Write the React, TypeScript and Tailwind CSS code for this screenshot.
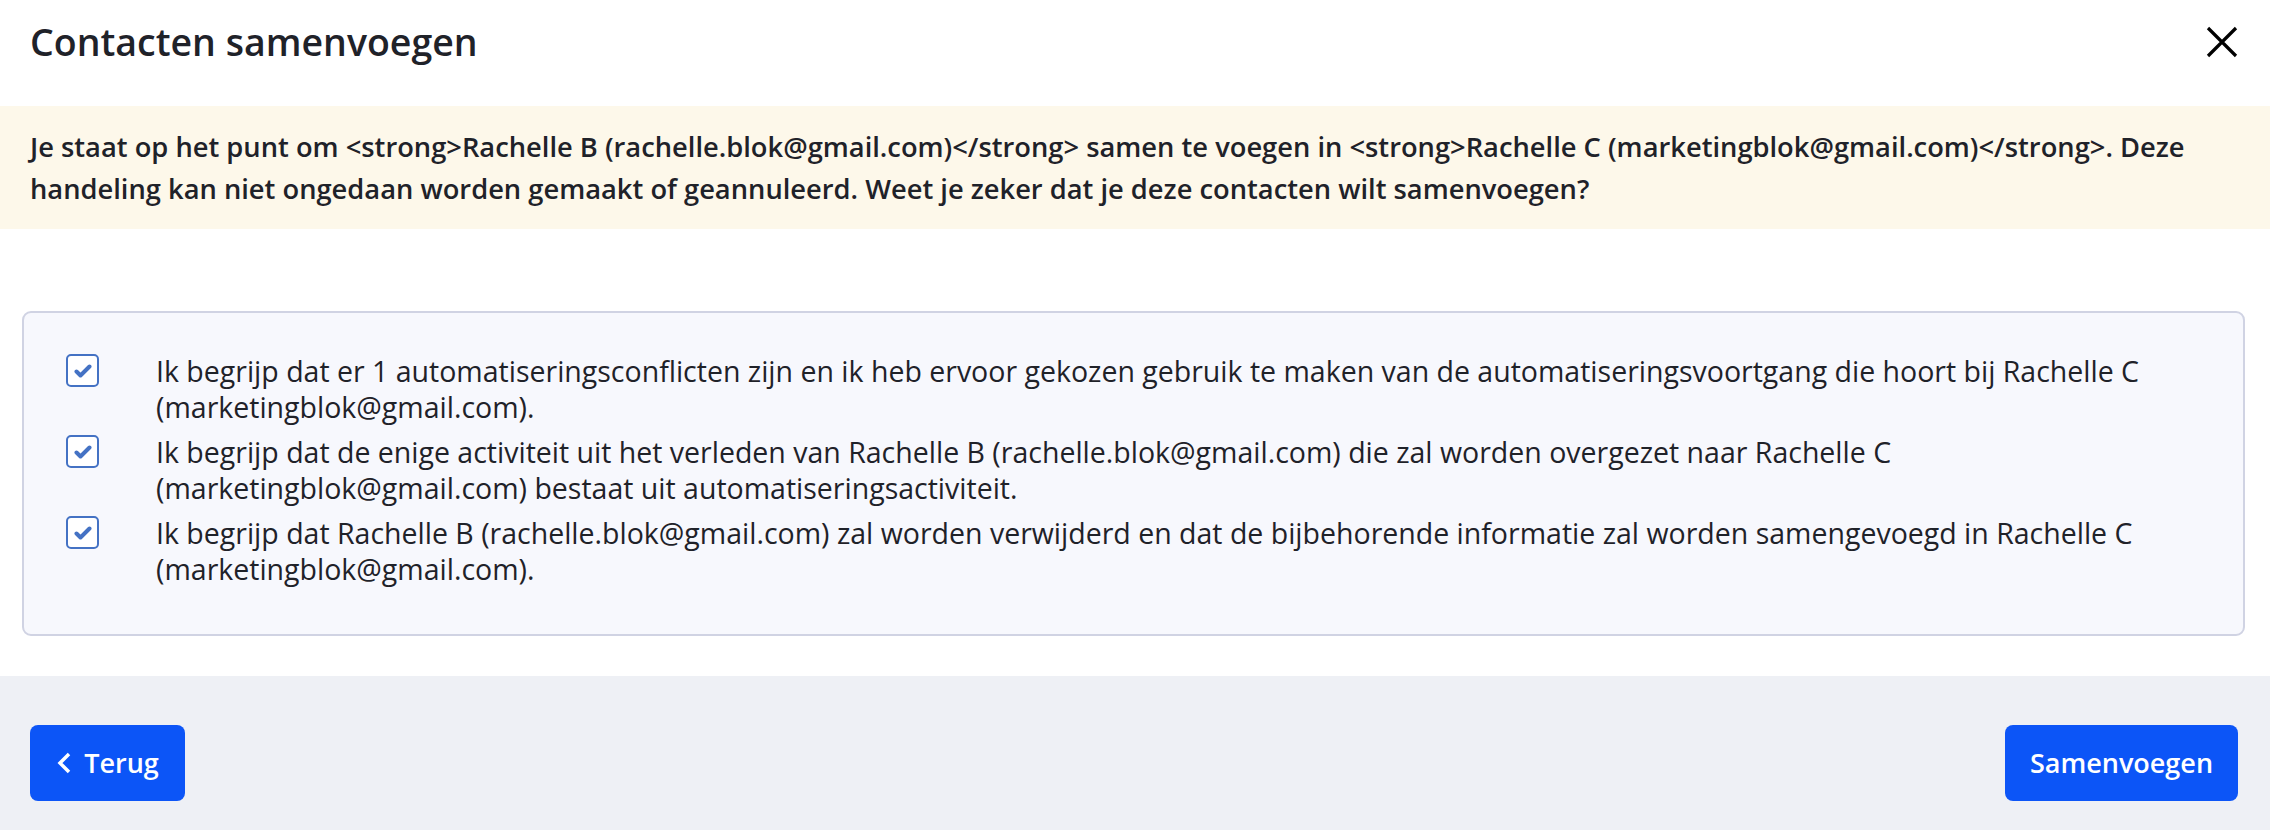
import React from "react";

const font = { fontFamily: '"Open Sans", "Liberation Sans", sans-serif' };

function CheckBox() {
  return (
    <div className="w-[33px] h-[33px] shrink-0 rounded-[5px] border-[2.5px] border-[#4472c4] bg-white flex items-center justify-center mt-[1px]">
      <svg width="18" height="16" viewBox="0 0 18 16">
        <path d="M2.5 8.5 L6.5 12.5 L15.5 3.5" fill="none" stroke="#4472c4" strokeWidth="4" strokeLinecap="round" strokeLinejoin="round" />
      </svg>
    </div>
  );
}

const items = [
  "Ik begrijp dat er 1 automatiseringsconflicten zijn en ik heb ervoor gekozen gebruik te maken van de automatiseringsvoortgang die hoort bij Rachelle C (marketingblok@gmail.com).",
  "Ik begrijp dat de enige activiteit uit het verleden van Rachelle B (rachelle.blok@gmail.com) die zal worden overgezet naar Rachelle C (marketingblok@gmail.com) bestaat uit automatiseringsactiviteit.",
  "Ik begrijp dat Rachelle B (rachelle.blok@gmail.com) zal worden verwijderd en dat de bijbehorende informatie zal worden samengevoegd in Rachelle C (marketingblok@gmail.com).",
];

export default function App() {
  return (
    <div className="w-[2270px] h-[830px] bg-white flex flex-col text-[#1f2229]" style={font}>
      <div className="h-[106px] shrink-0 flex items-center justify-between pl-[30px] pr-[32px] pb-[22px]">
        <h1 className="text-[37.5px] font-semibold leading-none">Contacten samenvoegen</h1>
        <svg width="32" height="32" viewBox="0 0 32 32">
          <path d="M2 2 L30 30 M30 2 L2 30" stroke="#000" strokeWidth="3.2" />
        </svg>
      </div>
      <div className="h-[123px] shrink-0 bg-[#fdf8ea] px-[30px] flex items-center">
        <p className="text-[27.3px] font-semibold leading-[42px]">
          Je staat op het punt om &lt;strong&gt;Rachelle B (rachelle.blok@gmail.com)&lt;/strong&gt; samen te voegen in &lt;strong&gt;Rachelle C (marketingblok@gmail.com)&lt;/strong&gt;. Deze handeling kan niet ongedaan worden gemaakt of geannuleerd. Weet je zeker dat je deze contacten wilt samenvoegen?
        </p>
      </div>
      <div className="flex-1 pt-[82px] px-[22px] pr-[25px]">
        <div className="h-[325px] rounded-[9px] border-2 border-[#d0d3e3] bg-[#f7f8fd] pl-[42px] pr-[40px] pt-[40px] flex flex-col gap-[9px]">
          {items.map((t, i) => (
            <div key={i} className="flex gap-[57px]">
              <CheckBox />
              <p className="text-[28.5px] font-medium leading-[36px]">{t}</p>
            </div>
          ))}
        </div>
      </div>
      <div className="h-[154px] shrink-0 bg-[#eef0f5] flex items-start justify-between pl-[30px] pr-[32px] pt-[49px]">
        <button className="h-[76px] w-[155px] rounded-[8px] bg-[#0c55f7] text-white text-[27px] font-semibold flex items-center justify-center gap-[12px]">
          <svg width="16" height="24" viewBox="0 0 16 24">
            <path d="M13 3 L4 12 L13 21" fill="none" stroke="#fff" strokeWidth="3.5" />
          </svg>
          Terug
        </button>
        <button className="h-[76px] w-[233px] rounded-[8px] bg-[#0c55f7] text-white text-[27px] font-semibold flex items-center justify-center">
          Samenvoegen
        </button>
      </div>
    </div>
  );
}
